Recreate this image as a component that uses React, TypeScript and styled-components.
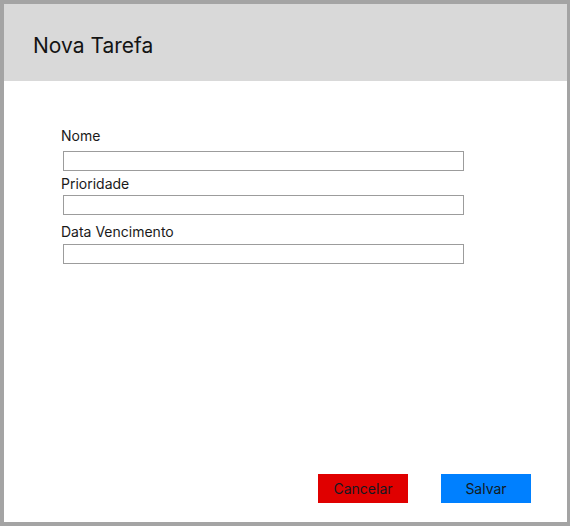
import React from 'react';
import styled, { createGlobalStyle } from 'styled-components';

const GlobalStyle = createGlobalStyle`
  html, body {
    margin: 0;
    padding: 0;
    background: #ffffff;
  }
  * {
    box-sizing: border-box;
  }
`;

const Frame = styled.div`
  width: 570px;
  height: 526px;
  border-style: solid;
  border-color: #a4a4a4;
  border-width: 4px 3px 4px 4px;
  display: flex;
  flex-direction: column;
  font-family: Inter, 'Noto Sans', sans-serif;
  color: #1a1a1a;
  background: #ffffff;
`;

const Header = styled.header`
  height: 77px;
  background: #d9d9d9;
  display: flex;
  align-items: center;
  padding-left: 29px;
`;

const Title = styled.h1`
  margin: 0;
  font-size: 21px;
  font-weight: 400;
  color: #141414;
  padding-top: 6px;
`;

const Body = styled.main`
  flex: 1;
  display: flex;
  flex-direction: column;
  padding: 46px 36px 19px 57px;
`;

const Form = styled.form`
  display: flex;
  flex-direction: column;
`;

const Label = styled.label<{ $top: number; $gap: number }>`
  display: block;
  font-size: 14px;
  line-height: 17px;
  margin-top: ${(p) => p.$top}px;
  margin-bottom: ${(p) => p.$gap}px;
  color: #1a1a1a;
`;

const Input = styled.input`
  display: block;
  width: 401px;
  height: 20px;
  margin: 0 0 0 2px;
  border: 1px solid #9c9c9c;
  background: #ffffff;
  font: inherit;
  font-size: 13px;
  padding: 0 4px;
  outline: none;
`;

const Actions = styled.div`
  margin-top: auto;
  display: flex;
  justify-content: flex-end;
  gap: 33px;
`;

const Button = styled.button<{ $color: string }>`
  width: 90px;
  height: 29px;
  border: 1px solid ${(p) => p.$color};
  background: ${(p) => p.$color};
  color: #141a22;
  font-family: inherit;
  font-size: 14px;
  padding: 0;
  cursor: pointer;
`;

const fields = [
  { id: 'nome', label: 'Nome', top: 0, gap: 7 },
  { id: 'prioridade', label: 'Prioridade', top: 4, gap: 3 },
  { id: 'vencimento', label: 'Data Vencimento', top: 8, gap: 4 },
];

const App: React.FC = () => {
  return (
    <>
      <GlobalStyle />
      <Frame>
        <Header>
          <Title>Nova Tarefa</Title>
        </Header>
        <Body>
          <Form onSubmit={(e) => e.preventDefault()}>
            {fields.map((f) => (
              <React.Fragment key={f.id}>
                <Label htmlFor={f.id} $top={f.top} $gap={f.gap}>
                  {f.label}
                </Label>
                <Input id={f.id} type="text" />
              </React.Fragment>
            ))}
          </Form>
          <Actions>
            <Button type="button" $color="#e00000">
              Cancelar
            </Button>
            <Button type="button" $color="#0080ff">
              Salvar
            </Button>
          </Actions>
        </Body>
      </Frame>
    </>
  );
};

export default App;
